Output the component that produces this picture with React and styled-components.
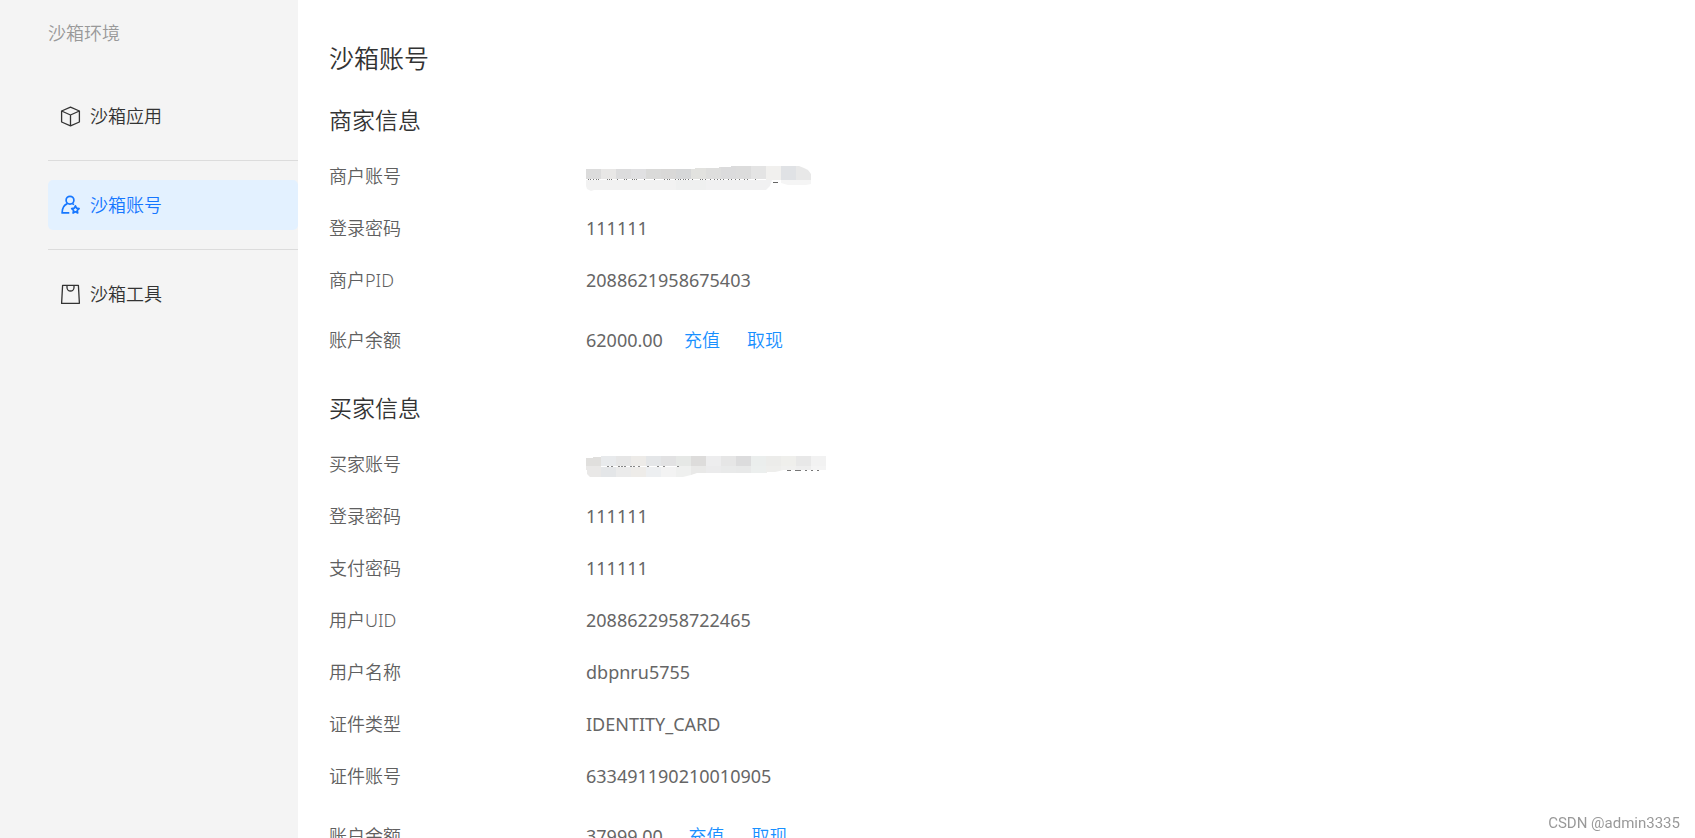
import React from "react";
import styled, { createGlobalStyle } from "styled-components";

const GlobalStyle = createGlobalStyle`
  * {
    box-sizing: border-box;
  }
  body {
    margin: 0;
    background: #ffffff;
    font-family: "Noto Sans", "Noto Sans CJK SC", sans-serif;
    font-size: 18px;
    line-height: 28px;
    color: #666666;
  }
`;

const Page = styled.div`
  display: flex;
  height: 100vh;
`;

const Sidebar = styled.aside`
  flex: 0 0 298px;
  padding: 19px 0 0 48px;
  background: #f4f4f4;
`;

const SidebarTitle = styled.div`
  margin-bottom: 25px;
  color: #999999;
  font-weight: 350;
`;

const MenuItem = styled.li`
  padding: 19px 0;
  & + & {
    border-top: 1px solid #dcdcdc;
  }
`;

const Menu = styled.ul`
  margin: 0;
  padding: 0;
  list-style: none;
`;

const MenuLink = styled.a`
  display: flex;
  align-items: center;
  gap: 9px;
  height: 50px;
  padding: 0 12px;
  border-radius: 5px;
  font-weight: 350;
  text-decoration: none;
  color: ${({ $active }) => ($active ? "#1677ff" : "#333333")};
  background: ${({ $active }) => ($active ? "#e3f1ff" : "transparent")};
`;

const MenuIcon = styled.svg`
  flex: none;
  width: 21px;
  height: 21px;
  fill: none;
  stroke: currentColor;
  stroke-linejoin: round;
`;

const Content = styled.main`
  flex: 1;
  min-width: 0;
  padding: 38px 30px 40px 31px;
  overflow-y: auto;
  scrollbar-width: none;
`;

const Title = styled.h1`
  margin: 0 0 8px;
  color: #333333;
  font-size: 25px;
  font-weight: 350;
  line-height: 40px;
`;

const Section = styled.section`
  padding-top: 14px;
`;

const SectionTitle = styled.h2`
  margin: 0 0 10px;
  color: #333333;
  font-size: 23px;
  font-weight: 350;
  line-height: 40px;
`;

const InfoList = styled.dl`
  margin: 0;
`;

const InfoRow = styled.div`
  display: flex;
  align-items: center;
  height: ${({ $tall }) => ($tall ? "68px" : "52px")};
`;

const Label = styled.dt`
  flex: 0 0 257px;
  color: #606060;
  font-weight: 350;
`;

const Value = styled.dd`
  display: flex;
  align-items: center;
  margin: 0;
  white-space: pre;
`;

const Actions = styled.span`
  display: flex;
  gap: 27px;
  margin-left: 21px;
`;

const ActionLink = styled.a`
  color: #1890ff;
  font-weight: 350;
  text-decoration: none;
`;

const Mosaic = styled.svg`
  display: block;
  margin-top: 4px;
`;

const Watermark = styled.div`
  position: fixed;
  right: 15px;
  bottom: 5px;
  color: #999999;
  font-family: Roboto, "Liberation Sans", sans-serif;
  font-size: 15px;
  line-height: 20px;
`;

const AppIcon = () => (
  <MenuIcon viewBox="0 0 21 21" strokeWidth="1.3" aria-hidden="true">
    <path d="M10.5 1.2 19.4 5v11L10.5 19.8 1.6 16V5z" />
    <path d="M1.6 5l8.9 4 8.9-4M10.5 9v10.8" />
  </MenuIcon>
);

const AccountIcon = () => (
  <MenuIcon viewBox="0 0 21 21" strokeWidth="1.7" aria-hidden="true">
    <circle cx="10" cy="5.2" r="3.9" />
    <path d="M7.4 8.6C4 10 2.1 13 2.1 17.9h7.2M12.4 8.6l1.6 1" />
    <path d="M15.4 10.8l1.1 2.4 2.6.4-1.9 1.8.5 2.6-2.3-1.2-2.3 1.2.5-2.6-1.9-1.8 2.6-.4z" />
  </MenuIcon>
);

const ToolIcon = () => (
  <MenuIcon viewBox="0 0 21 21" strokeWidth="1.3" aria-hidden="true">
    <path d="M2.6 1.4h15.8l1 18H1.6z" />
    <path d="M7 2v1.5a3.5 3.5 0 0 0 7 0V2" />
  </MenuIcon>
);

const menuItems = [
  { name: "沙箱应用", icon: AppIcon },
  { name: "沙箱账号", icon: AccountIcon, active: true },
  { name: "沙箱工具", icon: ToolIcon },
];

const merchantTop = [
  "#dcdcdc", "#e8e7e6", "#dcdcdd", "#e0e0e2", "#dadad9", "#d9d8d7", "#d6d7d8", "#e2e2df",
  "#dededd", "#dbdbdc", "#dcdcdc", "#e4e4e4", "#f1f0ee", "#e0e2e5", "#e8e8e8",
];
const merchantTicks = [
  2, 4, 7, 10, 12, 21, 23, 25, 31, 38, 40, 46, 48, 50, 58, 68, 78, 81, 83, 89, 92, 94, 97,
  99, 102, 106, 114, 116, 119, 124, 128, 131, 134, 137, 142, 145, 149, 153, 158, 161, 169,
];

const MerchantMosaic = () => (
  <Mosaic width="225" height="25" viewBox="0 0 225 25" role="img" aria-label="商户账号">
    <clipPath id="merchantShape">
      <path d="M0 3H109V2H133V1H145V0H213L218 2 222 4 225 8V18L220 19H202L195 17V14H186L184 20 180 24H8L5 25 1 23 0 20z" />
    </clipPath>
    <g clipPath="url(#merchantShape)" shapeRendering="crispEdges">
      {merchantTop.map((color, i) => (
        <rect key={i} x={i * 15} y="0" width="15" height={i > 11 ? 14 : 13} fill={color} />
      ))}
      <rect x="0" y="14" width="90" height="11" fill="#f2f2f2" />
      <rect x="90" y="14" width="30" height="11" fill="#eff0f0" />
      <rect x="120" y="14" width="66" height="11" fill="#f1f1f2" />
      <rect x="195" y="14" width="30" height="5" fill="#f5f5f5" />
      {merchantTicks.map((x) => (
        <rect key={x} x={x} y="13" width="1" height="1" fill="#777777" />
      ))}
    </g>
    <rect x="187" y="16" width="5" height="1" fill="#666666" />
  </Mosaic>
);

const buyerTop = [
  "#e0dfdd", "#e8eaec", "#e6e6e6", "#edebe8", "#e4e6e8", "#e2e2e3", "#e6e8e6", "#dddcdb",
  "#ededee", "#e6e6e6", "#dcdcdd", "#ebeeed", "#ececea", "#efefec", "#e8e8e8", "#f2f2f2",
];
const buyerBottom = [
  "#e9e8e7", "#e4e6e8", "#ebebeb", "#eeece9", "#edeff1", "#f3f3f3", "#eff0ef", "#e9e9e8",
  "#ebebec", "#e9eaea", "#e8e9e9", "#ecefee", "#eeeeec", "#f0f0ef", "#eeeeee", "#f4f4f4",
];
const buyerTicks = [21, 25, 32, 35, 38, 44, 47, 52, 61, 71, 77, 91];
const buyerTailTicks = [201, 203, 209, 211, 213, 219, 225, 231];

const BuyerMosaic = () => (
  <Mosaic width="240" height="21" viewBox="0 0 240 21" role="img" aria-label="买家账号">
    <clipPath id="buyerShape">
      <path d="M0 2H7V1H15V0H240V14H198L189 16H181V17H111L105 19 97 21H4L1 18V14H0z" />
    </clipPath>
    <g clipPath="url(#buyerShape)" shapeRendering="crispEdges">
      {buyerTop.map((color, i) => (
        <rect key={i} x={i * 15} y="0" width="15" height="10" fill={color} />
      ))}
      {buyerBottom.map((color, i) => (
        <rect key={i} x={i * 15} y="10" width="15" height="11" fill={color} />
      ))}
      <rect x="15" y="10" width="78" height="1" fill="#ffffff" />
      {buyerTicks.map((x) => (
        <rect key={x} x={x} y="10" width="2" height="1" fill="#888888" />
      ))}
    </g>
    {buyerTailTicks.map((x) => (
      <rect key={x} x={x} y="14" width="2" height="1" fill="#777777" />
    ))}
  </Mosaic>
);

const sections = [
  {
    title: "商家信息",
    rows: [
      { label: "商户账号", value: <MerchantMosaic /> },
      { label: "登录密码", value: "111111" },
      { label: "商户PID", value: "2088621958675403" },
      { label: "账户余额", value: "62000.00", balance: true },
    ],
  },
  {
    title: "买家信息",
    rows: [
      { label: "买家账号", value: <BuyerMosaic /> },
      { label: "登录密码", value: "111111" },
      { label: "支付密码", value: "111111" },
      { label: "用户UID", value: "2088622958722465" },
      { label: "用户名称", value: "dbpnru5755" },
      { label: "证件类型", value: "IDENTITY_CARD" },
      { label: "证件账号", value: "633491190210010905" },
      { label: "账户余额", value: "37999.00 ", balance: true },
    ],
  },
];

const App = () => {
  return (
    <Page>
      <GlobalStyle />
      <Sidebar>
        <SidebarTitle>沙箱环境</SidebarTitle>
        <nav>
          <Menu>
            {menuItems.map(({ name, icon: Icon, active }) => (
              <MenuItem key={name}>
                <MenuLink href="#" $active={active} aria-current={active ? "page" : undefined}>
                  <Icon />
                  {name}
                </MenuLink>
              </MenuItem>
            ))}
          </Menu>
        </nav>
      </Sidebar>
      <Content>
        <Title>沙箱账号</Title>
        {sections.map((section) => (
          <Section key={section.title}>
            <SectionTitle>{section.title}</SectionTitle>
            <InfoList>
              {section.rows.map((row) => (
                <InfoRow key={row.label} $tall={row.balance}>
                  <Label>{row.label}</Label>
                  <Value>
                    {row.value}
                    {row.balance && (
                      <Actions>
                        <ActionLink href="#">充值</ActionLink>
                        <ActionLink href="#">取现</ActionLink>
                      </Actions>
                    )}
                  </Value>
                </InfoRow>
              ))}
            </InfoList>
          </Section>
        ))}
      </Content>
      <Watermark>CSDN @admin3335</Watermark>
    </Page>
  );
};

export default App;
